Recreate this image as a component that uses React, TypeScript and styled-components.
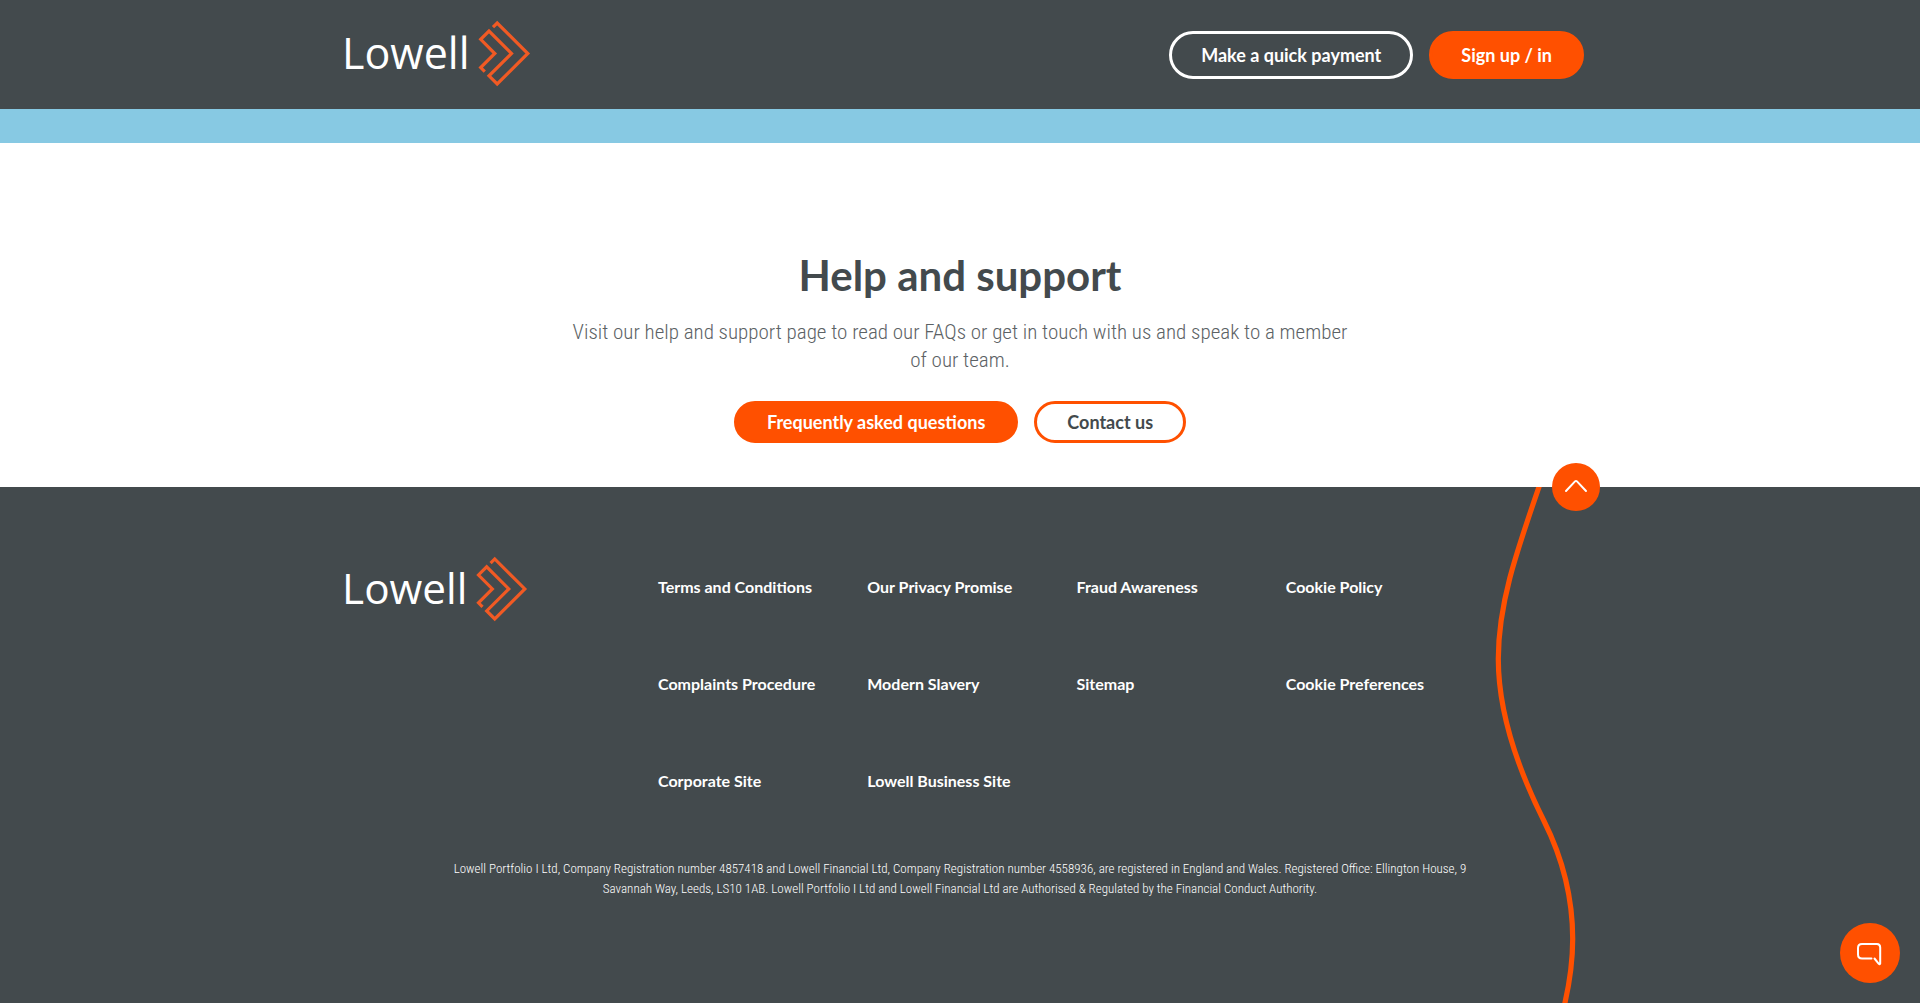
import React from "react";
import styled, { createGlobalStyle, css } from "styled-components";

const slate = "#434a4d";
const orange = "#ff5000";
const sky = "#87c9e3";

const GlobalStyle = createGlobalStyle`
  *, *::before, *::after { box-sizing: border-box; }
  html, body, #root { min-height: 100%; }
  body {
    margin: 0;
    background: #fff;
    color: ${slate};
    font-family: Lato, "Open Sans", sans-serif;
    font-size: 16px;
  }
`;

const Page = styled.div`
  display: flex;
  flex-direction: column;
  min-height: 100vh;
`;

const Container = styled.div`
  width: 100%;
  max-width: 1272px;
  margin: 0 auto;
  padding: 0 12px 0 20px;
`;

const Header = styled.header`
  background: ${slate};
  padding: 20px 0 22px;
`;

const HeaderRow = styled(Container)`
  display: flex;
  justify-content: space-between;
  align-items: flex-start;
`;

const HeaderActions = styled.nav`
  display: flex;
  gap: 16px;
  padding-top: 11px;
`;

const Pill = styled.a<{ $variant: "solid" | "light" | "outline"; $tall?: boolean }>`
  display: inline-flex;
  align-items: center;
  justify-content: center;
  height: ${(p) => (p.$tall ? 48 : 42)}px;
  padding: 0 ${(p) => (p.$tall ? 29 : 30)}px;
  border: 3px solid ${orange};
  border-radius: 24px;
  color: #fff;
  font-size: 18px;
  font-weight: 700;
  line-height: 24px;
  text-decoration: none;
  white-space: nowrap;
  ${(p) => p.$variant === "solid" && css`background: ${orange};`}
  ${(p) => p.$variant === "light" && css`border-color: #fff;`}
  ${(p) => p.$variant === "outline" && css`color: ${slate};`}
`;

const Band = styled.div`
  height: 34px;
  background: ${sky};
`;

const Help = styled.section`
  display: flex;
  flex-direction: column;
  align-items: center;
  padding: 104px 24px 44px;
  text-align: center;
`;

const Title = styled.h1`
  margin: 0;
  font-size: 42px;
  line-height: 56px;
  font-weight: 700;
`;

const Lead = styled.p`
  max-width: 790px;
  margin: 15px 0 27px;
  color: #5c6265;
  font-family: "Roboto Condensed", Roboto, sans-serif;
  font-size: 21px;
  line-height: 28px;
  font-weight: 300;
`;

const Actions = styled.div`
  display: flex;
  gap: 16px;
`;

const Footer = styled.footer`
  position: relative;
  flex: 1;
  background: ${slate};
  color: #fff;
  padding: 69px 0 103px;
`;

const FooterRow = styled(Container)`
  display: flex;
  align-items: flex-start;
`;

const FooterBrand = styled.div`
  flex: 0 0 314px;
`;

const Links = styled.ul`
  display: grid;
  grid-template-columns: repeat(4, minmax(0, 1fr));
  row-gap: 73px;
  flex: 0 1 837px;
  margin: 0;
  padding: 19px 0 0;
  list-style: none;
`;

const FooterLink = styled.a`
  color: #fff;
  font-weight: 700;
  line-height: 24px;
  text-decoration: none;
  white-space: nowrap;
`;

const Legal = styled.p`
  max-width: 1040px;
  margin: 66px auto 0;
  font-family: "Roboto Condensed", Roboto, sans-serif;
  font-size: 13px;
  line-height: 20px;
  font-weight: 300;
  text-align: center;
`;

const CurveBox = styled.div`
  position: absolute;
  top: 0;
  bottom: 0;
  left: calc(50% + 530px);
  width: 90px;
  overflow: hidden;
`;

const RoundButton = styled.button`
  display: flex;
  align-items: center;
  justify-content: center;
  padding: 0;
  border: 0;
  border-radius: 50%;
  background: ${orange};
  cursor: pointer;
`;

const TopButton = styled(RoundButton)`
  position: absolute;
  top: -24px;
  left: calc(50% + 592px);
  width: 48px;
  height: 48px;
`;

const ChatButton = styled(RoundButton)`
  position: fixed;
  right: 20px;
  bottom: 20px;
  width: 60px;
  height: 60px;
`;

const LogoLink = styled.a`
  display: block;
  svg { display: block; overflow: visible; }
`;

function Logo({ width }: { width: number }) {
  return (
    <LogoLink href="#" aria-label="Lowell">
      <svg width={width} viewBox="0 0 187 67">
        <text x="-2" y="49" fill="#fff" fontFamily="'Open Sans', sans-serif" fontSize="43">Lowell</text>
        <path
          d="M149 7.2 153.2 3 183.8 33.5 153.2 64 145 55.8 167.5 33.5 145 11 136.7 19.3 150.8 33.5 136.7 47.6 140.8 51.7"
          fill="none"
          stroke="#f15a24"
          strokeWidth="3.2"
        />
      </svg>
    </LogoLink>
  );
}

const links = [
  "Terms and Conditions",
  "Our Privacy Promise",
  "Fraud Awareness",
  "Cookie Policy",
  "Complaints Procedure",
  "Modern Slavery",
  "Sitemap",
  "Cookie Preferences",
  "Corporate Site",
  "Lowell Business Site",
];

export default function App() {
  return (
    <Page>
      <GlobalStyle />
      <Header>
        <HeaderRow>
          <Logo width={187} />
          <HeaderActions>
            <Pill href="#" $variant="light" $tall>Make a quick payment</Pill>
            <Pill href="#" $variant="solid" $tall>Sign up / in</Pill>
          </HeaderActions>
        </HeaderRow>
      </Header>
      <Band />
      <Help>
        <Title>Help and support</Title>
        <Lead>
          Visit our help and support page to read our FAQs or get in touch with us and speak to a member of our team.
        </Lead>
        <Actions>
          <Pill href="#" $variant="solid">Frequently asked questions</Pill>
          <Pill href="#" $variant="outline">Contact us</Pill>
        </Actions>
      </Help>
      <Footer>
        <CurveBox>
          <svg width="90" height="520" viewBox="0 0 90 520" aria-hidden="true">
            <path
              d="M50 -3C25 69 8.3 118 8.3 172C8.3 228 29 284 54 334C71 368 82.7 409 82.7 452C82.7 476 79.5 497 74 520"
              fill="none"
              stroke={orange}
              strokeWidth="5.2"
            />
          </svg>
        </CurveBox>
        <TopButton type="button" aria-label="Back to top">
          <svg width="24" height="16" viewBox="0 0 24 16" fill="none" stroke="#fff" strokeWidth="2" strokeLinecap="round" strokeLinejoin="round">
            <path d="M2 12 11 2.4Q12 1.4 13 2.4L22 12" />
          </svg>
        </TopButton>
        <FooterRow>
          <FooterBrand>
            <Logo width={184} />
          </FooterBrand>
          <Links>
            {links.map((label) => (
              <li key={label}>
                <FooterLink href="#">{label}</FooterLink>
              </li>
            ))}
          </Links>
        </FooterRow>
        <Legal>
          Lowell Portfolio I Ltd, Company Registration number 4857418 and Lowell Financial Ltd, Company Registration
          number 4558936, are registered in England and Wales. Registered Office: Ellington House, 9 Savannah Way,
          Leeds, LS10 1AB. Lowell Portfolio I Ltd and Lowell Financial Ltd are Authorised &amp; Regulated by the
          Financial Conduct Authority.
        </Legal>
      </Footer>
      <ChatButton type="button" aria-label="Open chat">
        <svg width="60" height="60" viewBox="0 0 60 60" fill="none" stroke="#fff" strokeWidth="2" strokeLinecap="round" strokeLinejoin="round">
          <path d="M31.5 35.5H22Q18 35.5 18 31.5V25Q18 21 22 21H37Q40.2 21 40.2 24.5V40.5Q39.8 41.8 38.8 40.8L34.5 35.5" />
        </svg>
      </ChatButton>
    </Page>
  );
}
